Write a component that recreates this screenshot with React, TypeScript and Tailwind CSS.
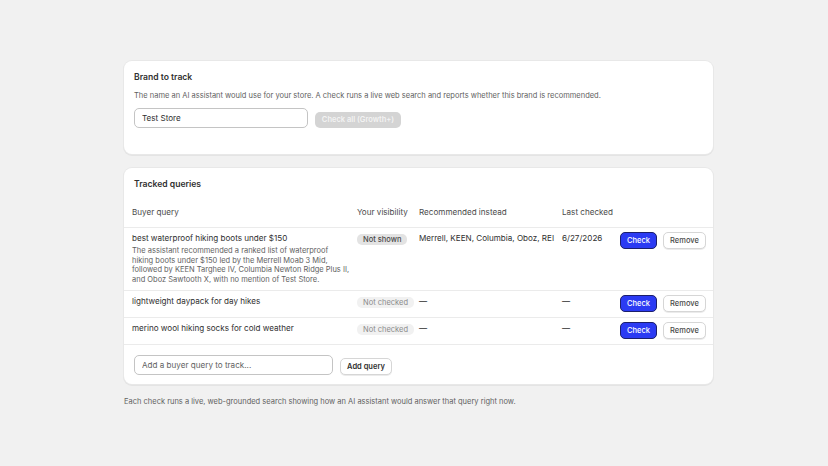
import React from 'react';

const rows = [
  {
    query: 'best waterproof hiking boots under $150',
    summary:
      'The assistant recommended a ranked list of waterproof hiking boots under $150 led by the Merrell Moab 3 Mid, followed by KEEN Targhee IV, Columbia Newton Ridge Plus II, and Oboz Sawtooth X, with no mention of Test Store.',
    status: 'Not shown',
    instead: 'Merrell, KEEN, Columbia, Oboz, REI',
    last: '6/27/2026',
  },
  { query: 'lightweight daypack for day hikes', status: 'Not checked', instead: '—', last: '—' },
  { query: 'merino wool hiking socks for cold weather', status: 'Not checked', instead: '—', last: '—' },
];

const cols = 'grid grid-cols-[225px_62px_143px_58px_101px]';
const card =
  'rounded-[8px] bg-white shadow-[0_0_0_1px_#e8e8e8,0_1px_0_1px_rgba(26,26,26,0.06)]';

export default function App() {
  return (
    <div className="min-h-[466px] bg-[#f1f1f1] pt-[61px] pl-[124px] font-['Inter',sans-serif] text-[#303030]">
      <div className="w-[589px]">
        {/* Brand card */}
        <div className={`${card} px-[10px] pt-[10px] pb-[26px]`}>
          <h2 className="text-[8.6px] leading-[12px] font-semibold">Brand to track</h2>
          <p className="mt-[7px] text-[7.5px] leading-[11px] text-[#616161]">
            The name an AI assistant would use for your store. A check runs a live web search and reports whether this brand is recommended.
          </p>
          <div className="mt-[7px] flex items-end gap-[7px]">
            <input
              defaultValue="Test Store"
              className="w-[174px] h-[20px] rounded-[5px] border border-[#c4c4c4] px-[7px] text-[8.1px] text-[#303030] outline-none"
            />
            <button className="h-[16px] w-[86px] rounded-[5px] bg-[#d4d4d4] text-[7.5px] font-semibold text-[#f3f3f3]">
              Check all (Growth+)
            </button>
          </div>
        </div>

        {/* Tracked queries card */}
        <div className={`${card} mt-[14px] pt-[10px] pb-[9px]`}>
          <h2 className="px-[10px] text-[8.6px] leading-[12px] font-semibold">Tracked queries</h2>
          <div className={`${cols} mt-[7px] h-[31px] items-center border-b border-[#ebebeb] text-[8.1px] text-[#4a4a4a]`}>
            <div className="pl-[8px] pt-[1px]">Buyer query</div>
            <div className="pl-[8px] pt-[1px] whitespace-nowrap">Your visibility</div>
            <div className="pl-[8px] pt-[1px] whitespace-nowrap">Recommended instead</div>
            <div className="pl-[8px] pt-[1px] whitespace-nowrap">Last checked</div>
            <div />
          </div>
          {rows.map((r, i) => (
            <div key={i} className={`${cols} items-start border-b border-[#ebebeb] pt-[4px] pb-[5px] text-[8.1px]`}>
              <div className="pl-[8px] pt-[1px]">
                <div className="leading-[11px] text-[#303030]">{r.query}</div>
                {r.summary && (
                  <p className="mt-[2px] -mr-[2px] text-[7.5px] leading-[9.7px] text-[#616161]">{r.summary}</p>
                )}
              </div>
              <div className="pl-[8px] pt-[1px]">
                <span
                  className={`inline-block whitespace-nowrap rounded-[5px] px-[6px] leading-[11px] text-[7.5px] ${
                    r.status === 'Not shown' ? 'bg-[#e3e3e3] text-[#4a4a4a] font-medium' : 'bg-[#f1f1f1] text-[#8a8a8a]'
                  }`}
                >
                  {r.status}
                </span>
              </div>
              <div className="pl-[8px] pt-[1px] leading-[11px] whitespace-nowrap text-[#303030]">{r.instead}</div>
              <div className="pl-[8px] pt-[1px] leading-[11px] whitespace-nowrap text-[#303030]">{r.last}</div>
              <div className="pl-[8px] flex gap-[6px]">
                <button className="h-[17px] w-[37px] rounded-[5px] bg-[#2b3bf3] border border-[#1c1f6b] text-[7.5px] font-medium text-white">
                  Check
                </button>
                <button className="h-[17px] w-[43px] rounded-[5px] bg-white border border-[#d6d6d6] shadow-[0_1px_0_rgba(0,0,0,0.08)] text-[7.5px] font-medium text-[#4a4a4a]">
                  Remove
                </button>
              </div>
            </div>
          ))}
          <div className="mt-[10px] px-[10px] flex items-end gap-[7px]">
            <input
              placeholder="Add a buyer query to track..."
              className="w-[199px] h-[20px] rounded-[5px] border border-[#c4c4c4] px-[7px] text-[8.1px] text-[#303030] placeholder:text-[#616161] outline-none"
            />
            <button className="h-[17px] w-[52px] rounded-[5px] bg-white border border-[#d6d6d6] shadow-[0_1px_0_rgba(0,0,0,0.08)] text-[7.5px] font-semibold text-[#303030]">
              Add query
            </button>
          </div>
        </div>

        <p className="mt-[12px] text-[7.5px] leading-[11px] text-[#616161]">
          Each check runs a live, web-grounded search showing how an AI assistant would answer that query right now.
        </p>
      </div>
    </div>
  );
}
